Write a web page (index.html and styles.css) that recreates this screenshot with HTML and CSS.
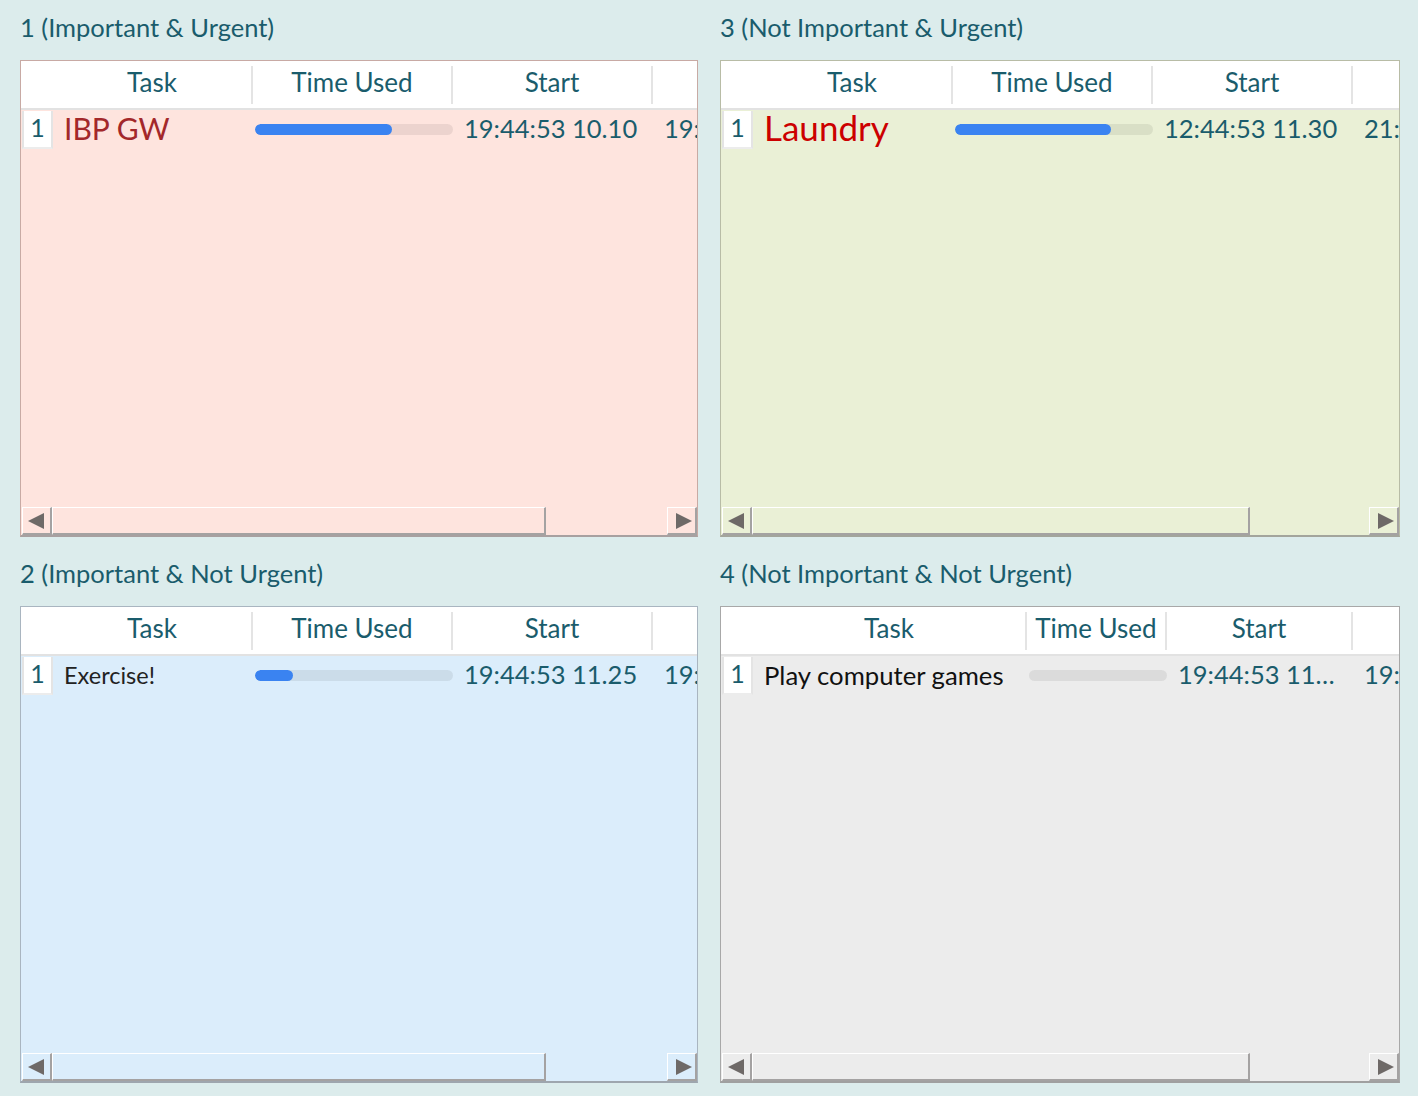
FILE: index.html
```html
<!DOCTYPE html>
<html>
<head>
<meta charset="utf-8">
<link rel="stylesheet" href="styles.css">
</head>
<body>
<div class="matrix">
  <section class="quad">
    <h2 class="qlabel">1 (Important &amp; Urgent)</h2>
    <div class="panel p1">
      <div class="table cols-a">
        <div class="head">
          <div class="hc hrn"></div>
          <div class="hc">Task</div>
          <div class="hc">Time Used</div>
          <div class="hc">Start</div>
          <div class="hc"></div>
        </div>
        <div class="row">
          <div class="rn">1</div>
          <div class="task t1">IBP GW</div>
          <div class="barcell"><div class="bar"><div class="fill" style="width:69%"></div></div></div>
          <div class="time">19:44:53 10.10</div>
          <div class="time">19:44:53</div>
        </div>
      </div>
      <div class="scroll">
        <div class="sbtn"><span class="tri left"></span></div>
        <div class="thumb"></div>
        <div class="track"></div>
        <div class="sbtn"><span class="tri right"></span></div>
      </div>
    </div>
  </section>
  <section class="quad">
    <h2 class="qlabel">3 (Not Important &amp; Urgent)</h2>
    <div class="panel p3">
      <div class="table cols-a">
        <div class="head">
          <div class="hc hrn"></div>
          <div class="hc">Task</div>
          <div class="hc">Time Used</div>
          <div class="hc">Start</div>
          <div class="hc"></div>
        </div>
        <div class="row">
          <div class="rn">1</div>
          <div class="task t3">Laundry</div>
          <div class="barcell"><div class="bar"><div class="fill" style="width:79%"></div></div></div>
          <div class="time">12:44:53 11.30</div>
          <div class="time">21:44:53</div>
        </div>
      </div>
      <div class="scroll">
        <div class="sbtn"><span class="tri left"></span></div>
        <div class="thumb wide"></div>
        <div class="track"></div>
        <div class="sbtn"><span class="tri right"></span></div>
      </div>
    </div>
  </section>
  <section class="quad">
    <h2 class="qlabel">2 (Important &amp; Not Urgent)</h2>
    <div class="panel p2">
      <div class="table cols-a">
        <div class="head">
          <div class="hc hrn"></div>
          <div class="hc">Task</div>
          <div class="hc">Time Used</div>
          <div class="hc">Start</div>
          <div class="hc"></div>
        </div>
        <div class="row">
          <div class="rn">1</div>
          <div class="task t2">Exercise!</div>
          <div class="barcell"><div class="bar"><div class="fill" style="width:19%"></div></div></div>
          <div class="time">19:44:53 11.25</div>
          <div class="time">19:44:53</div>
        </div>
      </div>
      <div class="scroll">
        <div class="sbtn"><span class="tri left"></span></div>
        <div class="thumb"></div>
        <div class="track"></div>
        <div class="sbtn"><span class="tri right"></span></div>
      </div>
    </div>
  </section>
  <section class="quad">
    <h2 class="qlabel">4 (Not Important &amp; Not Urgent)</h2>
    <div class="panel p4">
      <div class="table cols-b">
        <div class="head">
          <div class="hc hrn"></div>
          <div class="hc">Task</div>
          <div class="hc">Time Used</div>
          <div class="hc">Start</div>
          <div class="hc"></div>
        </div>
        <div class="row">
          <div class="rn">1</div>
          <div class="task t4">Play computer games</div>
          <div class="barcell"><div class="bar"><div class="fill" style="width:0%"></div></div></div>
          <div class="time">19:44:53 11…</div>
          <div class="time">19:44:53</div>
        </div>
      </div>
      <div class="scroll">
        <div class="sbtn"><span class="tri left"></span></div>
        <div class="thumb wide"></div>
        <div class="track"></div>
        <div class="sbtn"><span class="tri right"></span></div>
      </div>
    </div>
  </section>
</div>
</body>
</html>
```

FILE: styles.css
```css
html, body {
  margin: 0;
  padding: 0;
}
body {
  background: #dcecec;
  font-family: "Lato", "Open Sans", sans-serif;
  color: #1a5c6c;
  width: 1418px;
  height: 1096px;
  overflow: hidden;
}
.matrix {
  display: grid;
  grid-template-columns: 678px 680px;
  column-gap: 22px;
  row-gap: 9px;
  padding: 0 18px 0 20px;
}
.quad {
  display: flex;
  flex-direction: column;
  min-width: 0;
}
.qlabel {
  margin: 0;
  height: 60px;
  line-height: 54px;
  font-size: 25.5px;
  font-weight: normal;
  color: #1a5c6c;
  white-space: nowrap;
}
.panel {
  height: 477px;
  box-sizing: border-box;
  border: 1px solid #c7a7a0;
  border-bottom: 2px solid #a59c9b;
  display: flex;
  flex-direction: column;
  overflow: hidden;
}
.p1 { background: #fee4de; border-color: #c8aaa4; border-bottom-color: #a8a0a0; }
.p3 { background: #eaf0d6; border-color: #b8bca6; border-bottom-color: #a3a59c; }
.p2 { background: #dbedfb; border-color: #a9b5c0; border-bottom-color: #9ea6ae; }
.p4 { background: #ececec; border-color: #a8a8a8; border-bottom-color: #a0a0a0; }

.table {
  flex: 1;
  display: flex;
  flex-direction: column;
}
.head, .row {
  display: grid;
  grid-template-columns: 32px 200px 200px 200px 200px;
}
.cols-b .head, .cols-b .row {
  grid-template-columns: 32px 274px 140px 186px 200px;
}
.head {
  background: #ffffff;
  height: 47px;
  border-bottom: 2px solid #e2e2e2;
}
.hc {
  display: flex;
  align-items: center;
  justify-content: center;
  font-size: 26px;
  color: #1a5c6c;
  border-right: 2px solid #e4e4e4;
  margin: 5px 0 4px;
  padding-bottom: 6px;
  white-space: nowrap;
}
.hc.hrn {
  border-right: none;
}
.row {
  height: 40px;
  grid-template-rows: 40px;
  align-items: center;
}
.rn {
  align-self: start;
  height: 38px;
  width: 31px;
  margin: 1px 0 0 1px;
  box-sizing: border-box;
  background: #fff;
  border-left: 2px solid #e4e4e4;
  border-right: 2px solid #e4e4e4;
  border-bottom: 2px solid #ececec;
  text-align: center;
  font-size: 25px;
  color: #1a5c6c;
  line-height: 32px;
}
.task {
  padding-left: 11px;
  white-space: nowrap;
  line-height: 34px;
  height: 34px;
  padding-bottom: 4px;
}
.t1 { color: #a3282a; font-size: 30px; }
.t3 { color: #cc0000; font-size: 35px; line-height: 36px; height: 36px; padding-bottom: 6px; }
.t2 { color: #222; font-size: 23.5px; padding-bottom: 2px; }
.t4 { color: #111; font-size: 25.7px; padding-bottom: 2px; }
.barcell {
  padding-left: 2px;
}
.bar {
  height: 11px;
  border-radius: 6px;
  background: rgba(0, 0, 0, 0.07);
  overflow: hidden;
  margin-bottom: 1px;
}
.fill {
  height: 100%;
  background: #3a83f1;
  border-radius: 6px;
}
.time {
  padding-left: 11px;
  padding-bottom: 4px;
  line-height: 34px;
  font-size: 25.5px;
  color: #1a5c6c;
  white-space: nowrap;
  overflow: hidden;
}

.scroll {
  height: 28px;
  display: flex;
  padding-left: 1px;
  flex: none;
}
.sbtn {
  width: 30px;
  box-sizing: border-box;
  border-top: 1px solid #ffffff;
  border-left: 1px solid #ffffff;
  border-right: 2px solid #a4a2a2;
  border-bottom: 2px solid #a4a2a2;
  display: flex;
  align-items: center;
  justify-content: center;
  flex: none;
}
.thumb {
  width: 494px;
  box-sizing: border-box;
  border-top: 1px solid #ffffff;
  border-left: 1px solid #ffffff;
  border-right: 2px solid #a4a2a2;
  border-bottom: 2px solid #a4a2a2;
  flex: none;
}
.thumb.wide {
  width: 498px;
}
.track {
  flex: 1;
}
.tri {
  width: 0;
  height: 0;
  border-top: 8px solid transparent;
  border-bottom: 8px solid transparent;
}
.tri.left {
  border-right: 16px solid #6e6967;
  margin-right: 2px;
}
.tri.right {
  border-left: 16px solid #6e6967;
  margin-left: 4px;
}
```
